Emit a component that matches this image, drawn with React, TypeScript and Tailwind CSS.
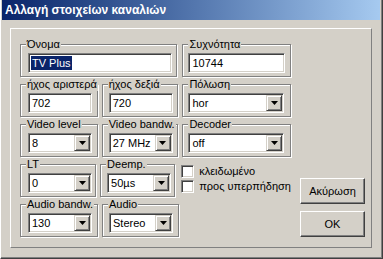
import React from 'react';

const sunken =
  'border border-t-[#808080] border-l-[#808080] border-b-white border-r-white shadow-[inset_1px_1px_0_#404040,inset_-1px_-1px_0_#d4d0c8] bg-white';
const raised =
  'border border-t-white border-l-white border-b-[#404040] border-r-[#404040] shadow-[inset_-1px_-1px_0_#808080]';

function GroupBox({ label, className, children }: { label: string; className: string; children: React.ReactNode }) {
  return (
    <div className={`relative h-[33px] border border-[#808080] shadow-[inset_1px_1px_0_#fff,1px_1px_0_#fff] ${className}`}>
      <span className="absolute -top-[7px] left-[5px] bg-[#d4d0c8] px-[1px] leading-[13px] whitespace-nowrap">{label}</span>
      <div className="pt-[8px] pl-[7px]">{children}</div>
    </div>
  );
}

function TextBox({ value, className, selected }: { value: string; className: string; selected?: boolean }) {
  return (
    <div className={`${sunken} h-[20px] flex items-center pl-[2px] ${className}`}>
      {selected ? <span className="bg-[#0a246a] text-white leading-[14px] px-[1px]">{value}</span> : <span className="px-[1px]">{value}</span>}
    </div>
  );
}

function Combo({ value, className }: { value: string; className: string }) {
  return (
    <div className={`${sunken} h-[20px] flex items-center justify-between pl-[3px] pr-[1px] ${className}`}>
      <span>{value}</span>
      <div className="w-[16px] h-[16px] bg-[#d4d0c8] border border-t-[#d4d0c8] border-l-[#d4d0c8] border-b-[#404040] border-r-[#404040] shadow-[inset_1px_1px_0_#fff,inset_-1px_-1px_0_#808080] flex items-center justify-center">
        <svg width="7" height="4" viewBox="0 0 7 4">
          <path d="M0 0h7L3.5 4z" fill="#000" />
        </svg>
      </div>
    </div>
  );
}

function Check({ label }: { label: string }) {
  return (
    <div className="flex items-center gap-[5px] h-[13px]">
      <div className={`${sunken} w-[13px] h-[13px]`} />
      <span className="leading-[13px] whitespace-nowrap">{label}</span>
    </div>
  );
}

function Button({ label }: { label: string }) {
  return (
    <div className={`${raised} w-[65px] h-[26px] flex items-center justify-center bg-[#d4d0c8]`}>{label}</div>
  );
}

export default function App() {
  return (
    <div className="w-[383px] h-[259px] bg-[#d4d0c8] text-[11px] text-black font-['Liberation_Sans',Arial,sans-serif] flex flex-col border-l border-l-white border-r border-r-[#404040] border-b border-b-[#404040] shadow-[inset_-1px_-1px_0_#808080] overflow-hidden">
      <div className="ml-[1px] mr-[2px] h-[20px] bg-linear-to-r from-[#0a246a] to-[#a6caf0] flex items-center pl-[3px] text-white font-bold text-[12px]">
        Αλλαγή στοιχείων καναλιών
      </div>
      <div className="ml-[9px] mt-[8px] w-[362px] h-[220px] border border-t-white border-l-white border-r-[#808080] border-b-[#808080] flex pl-[9px] pt-[15px]">
        <div className="w-[271px] flex flex-col gap-[7px]">
          <div className="flex gap-[5px]">
            <GroupBox label="Όνομα" className="w-[158px]">
              <TextBox value="TV Plus" className="w-[144px]" selected />
            </GroupBox>
            <GroupBox label="Συχνότητα" className="w-[109px]">
              <TextBox value="10744" className="w-[97px] -ml-[2px]" />
            </GroupBox>
          </div>
          <div className="flex">
            <GroupBox label="ήχος αριστερά" className="w-[78px] mr-[4px]">
              <TextBox value="702" className="w-[64px]" />
            </GroupBox>
            <GroupBox label="ήχος δεξιά" className="w-[77px] mr-[4px]">
              <TextBox value="720" className="w-[64px] -ml-[1px]" />
            </GroupBox>
            <GroupBox label="Πόλωση" className="w-[109px]">
              <Combo value="hor" className="w-[96px] -ml-[2px]" />
            </GroupBox>
          </div>
          <div className="flex">
            <GroupBox label="Video level" className="w-[78px] mr-[4px]">
              <Combo value="8" className="w-[64px]" />
            </GroupBox>
            <GroupBox label="Video bandw." className="w-[77px] mr-[4px]">
              <Combo value="27 MHz" className="w-[64px] -ml-[1px]" />
            </GroupBox>
            <GroupBox label="Decoder" className="w-[109px]">
              <Combo value="off" className="w-[96px] -ml-[2px]" />
            </GroupBox>
          </div>
          <div className="flex">
            <GroupBox label="LT" className="w-[78px] mr-[4px]">
              <Combo value="0" className="w-[64px]" />
            </GroupBox>
            <GroupBox label="Deemp." className="w-[77px] mr-[6px]">
              <Combo value="50µs" className="w-[64px] -ml-[1px]" />
            </GroupBox>
            <div className="flex flex-col gap-[2px] mt-[1px]">
              <Check label="κλειδωμένο" />
              <Check label="προς υπερπήδηση" />
            </div>
          </div>
          <div className="flex">
            <GroupBox label="Audio bandw." className="w-[78px] mr-[4px]">
              <Combo value="130" className="w-[64px]" />
            </GroupBox>
            <GroupBox label="Audio" className="w-[77px]">
              <Combo value="Stereo" className="w-[64px] -ml-[1px]" />
            </GroupBox>
          </div>
        </div>
        <div className="ml-[9px] mt-[134px] flex flex-col gap-[7px]">
          <Button label="Ακύρωση" />
          <Button label="OK" />
        </div>
      </div>
    </div>
  );
}
